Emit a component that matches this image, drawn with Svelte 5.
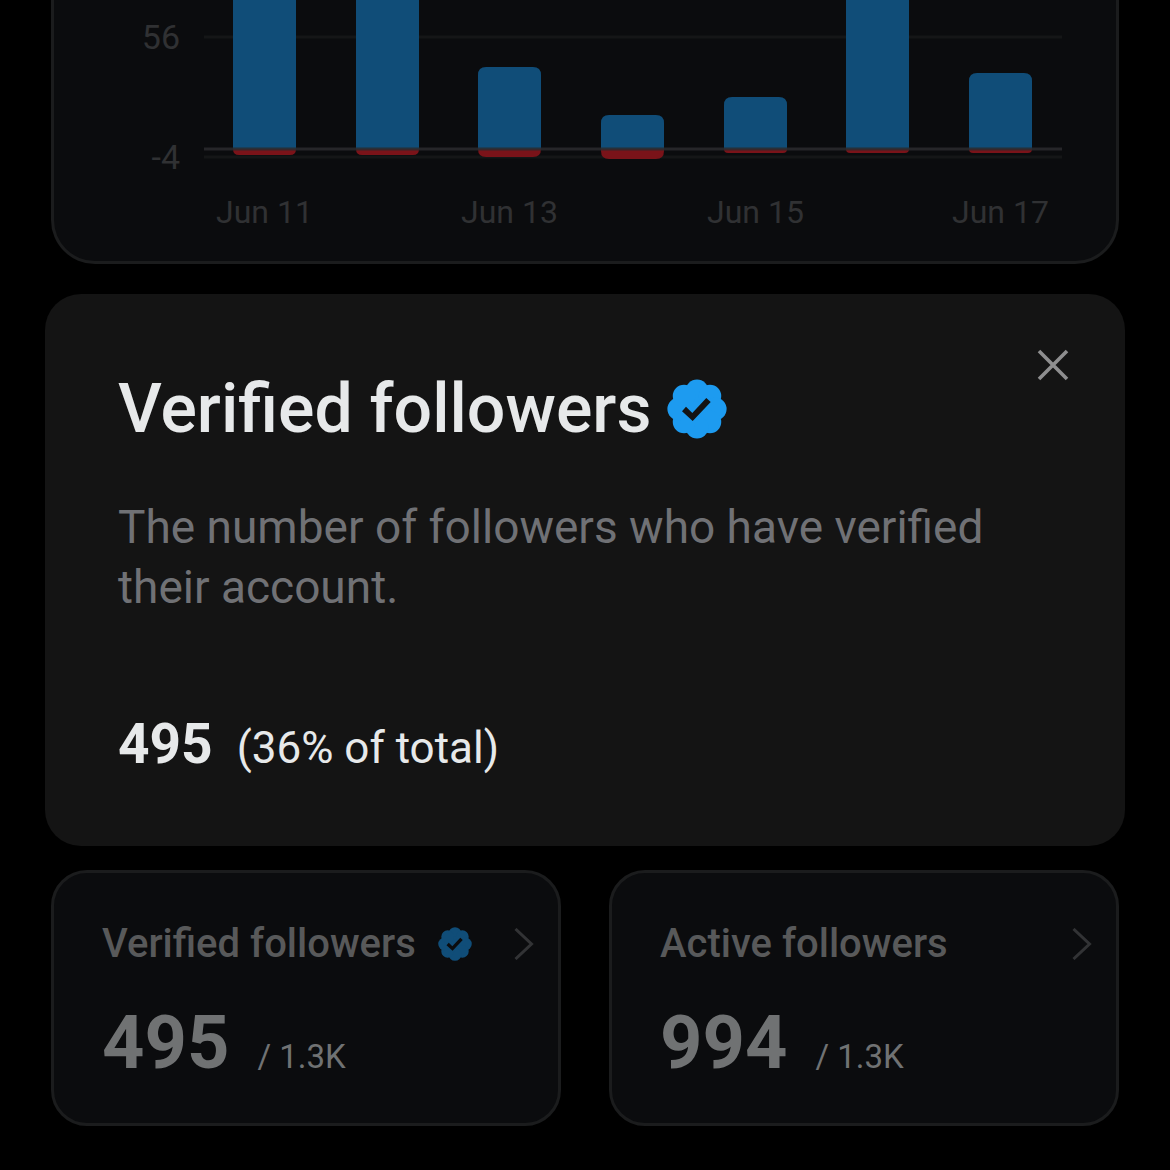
<script lang="ts">
  interface Day {
    label: string;
    gained: number;
    lost: number;
  }

  interface Stat {
    title: string;
    value: string;
    total: string;
    verified: boolean;
    href: string;
  }

  const days: Day[] = [
    { label: 'Jun 11', gained: 96, lost: 3 },
    { label: 'Jun 12', gained: 88, lost: 3 },
    { label: 'Jun 13', gained: 41, lost: 4 },
    { label: 'Jun 14', gained: 17, lost: 5 },
    { label: 'Jun 15', gained: 26, lost: 2 },
    { label: 'Jun 16', gained: 92, lost: 2 },
    { label: 'Jun 17', gained: 38, lost: 2 },
  ];

  const stats: Stat[] = [
    { title: 'Verified followers', value: '495', total: '1.3K', verified: true, href: '#verified' },
    { title: 'Active followers', value: '994', total: '1.3K', verified: false, href: '#active' },
  ];

  const ticks = [56, -4];

  // Chart geometry, in viewBox units
  const plot = { left: 150, right: 1008, zero: 149 };
  const unit = 2;
  const barWidth = 63;
  const radius = 8;
  const step = (plot.right - plot.left) / days.length;

  const lobes = [0, 45, 90, 135, 180, 225, 270, 315];

  let open = $state(true);

  function barX(i: number): number {
    return Math.floor(plot.left + step * (i + 0.5) - barWidth / 2);
  }

  // Rounded on the far end only, flat on the zero line
  function barPath(i: number, value: number): string {
    const x = barX(i);
    const h = Math.abs(value) * unit;
    const dir = value > 0 ? -1 : 1;
    const r = Math.min(radius, h);
    const end = plot.zero + dir * h;
    return [
      `M${x} ${plot.zero}`,
      `V${end - dir * r}`,
      `Q${x} ${end} ${x + r} ${end}`,
      `H${x + barWidth - r}`,
      `Q${x + barWidth} ${end} ${x + barWidth} ${end - dir * r}`,
      `V${plot.zero}Z`,
    ].join('');
  }
</script>

{#snippet badge()}
  <svg class="badge" viewBox="-30 -30 60 60" role="img" aria-label="Verified">
    <circle r="24" />
    {#each lobes as angle}
      <circle cy="-18.3" r="11.3" transform={`rotate(${angle})`} />
    {/each}
    <path class="check" d="M-15 2.3L-11-2.3L-4.7 4L9.3-11L13.7-7L-4.3 12Z" />
  </svg>
{/snippet}

<main class="page">
  <section class="chart" aria-label="Followers over time">
    <svg viewBox="0 0 1062 261">
      {#each ticks as tick}
        <line class="grid" x1={plot.left} x2={plot.right} y1={plot.zero - tick * unit} y2={plot.zero - tick * unit} />
        <text class="tick" x="126" y={plot.zero - tick * unit + 12} text-anchor="end">{tick}</text>
      {/each}
      {#each days as day, i}
        <path class="gained" d={barPath(i, day.gained)} />
        <path class="lost" d={barPath(i, -day.lost)} />
        {#if i % 2 === 0}
          <text class="date" x={barX(i) + barWidth / 2} y="223" text-anchor="middle">{day.label}</text>
        {/if}
      {/each}
      <line class="zero" x1={plot.left} x2={plot.right} y1={plot.zero} y2={plot.zero} />
    </svg>
  </section>

  {#if open}
    <section class="sheet" aria-labelledby="sheet-title">
      <div class="sheet-head">
        <h1 id="sheet-title">Verified followers</h1>
        {@render badge()}
        <button class="close" type="button" aria-label="Close" onclick={() => (open = false)}>
          <svg viewBox="0 0 32 32"><path d="M2 2l28 28M30 2l-28 28" /></svg>
        </button>
      </div>
      <p class="description">The number of followers who have verified their account.</p>
      <p class="summary"><strong>495</strong><span>(36% of total)</span></p>
    </section>
  {/if}

  <div class="stats">
    {#each stats as stat}
      <a class="stat" href={stat.href}>
        <div class="stat-head">
          <h2>{stat.title}</h2>
          {#if stat.verified}
            {@render badge()}
          {/if}
          <svg class="chevron" viewBox="0 0 20 32"><path d="M1.5 1L17.5 16L1.5 31" /></svg>
        </div>
        <p class="stat-value"><strong>{stat.value}</strong><span>/ {stat.total}</span></p>
      </a>
    {/each}
  </div>
</main>

<style>
  :global(body) {
    background: #000;
  }

  .page {
    padding: 0 45px 45px;
    font-family: Roboto, 'Liberation Sans', sans-serif;
  }

  h1,
  h2,
  p {
    margin: 0;
  }

  svg {
    display: block;
  }

  .chart {
    margin: 0 6px;
    border: 3px solid #1b1c1d;
    border-top: 0;
    border-radius: 0 0 44px 44px;
    background: #0b0c0e;
  }

  .chart svg {
    width: 100%;
  }

  .grid {
    stroke: #151617;
    stroke-width: 3;
  }

  .zero {
    stroke: #2b2c2e;
    stroke-opacity: 0.85;
    stroke-width: 3;
  }

  .tick,
  .date {
    fill: #303133;
    font-size: 34px;
  }

  .date {
    font-size: 32px;
  }

  .gained {
    fill: #104d78;
  }

  .lost {
    fill: #7a1319;
  }

  .sheet {
    position: relative;
    margin: 30px 0 24px;
    padding: 73px 72px 68px 73px;
    border-radius: 36px;
    background: #141414;
    color: #e7e9ea;
  }

  .sheet-head {
    display: flex;
    align-items: center;
    gap: 16px;
  }

  h1 {
    font-size: 68px;
    font-weight: 500;
    line-height: 84px;
  }

  .badge {
    flex: none;
    width: 60px;
    height: 60px;
    fill: #1d9bf0;
  }

  .check {
    fill: #141414;
  }

  .close {
    position: absolute;
    top: 44px;
    right: 45px;
    padding: 11px;
    border: 0;
    background: none;
    cursor: pointer;
  }

  .close svg {
    width: 32px;
    height: 32px;
    fill: none;
    stroke: #8e8e8f;
    stroke-width: 3.6;
  }

  .description {
    margin-top: 46px;
    color: #707175;
    font-size: 46px;
    line-height: 60px;
  }

  .summary {
    display: flex;
    align-items: baseline;
    gap: 24px;
    margin-top: 97px;
    font-size: 44px;
    line-height: 60px;
  }

  .summary strong {
    font-size: 55px;
    font-weight: 700;
  }

  .stats {
    display: grid;
    grid-template-columns: 1fr 1fr;
    gap: 48px;
    margin: 0 6px;
  }

  .stat {
    padding: 44px 24px 24px 48px;
    border: 3px solid #1b1c1d;
    border-radius: 36px;
    background: #0b0c0e;
    color: #707273;
    text-decoration: none;
  }

  .stat-head {
    display: flex;
    align-items: center;
    gap: 22px;
  }

  h2 {
    color: #58595a;
    font-size: 40px;
    font-weight: 500;
    line-height: 54px;
  }

  .stat .badge {
    width: 34px;
    height: 34px;
    fill: #104d78;
  }

  .stat .check {
    fill: #0b0c0e;
  }

  .chevron {
    width: 20px;
    height: 32px;
    margin-left: auto;
    fill: none;
    stroke: #323335;
    stroke-width: 3;
  }

  .stat-value {
    display: flex;
    align-items: baseline;
    gap: 28px;
    margin-top: 30px;
    font-size: 33px;
    line-height: 84px;
  }

  .stat-value strong {
    font-size: 74px;
    font-weight: 700;
  }
</style>
